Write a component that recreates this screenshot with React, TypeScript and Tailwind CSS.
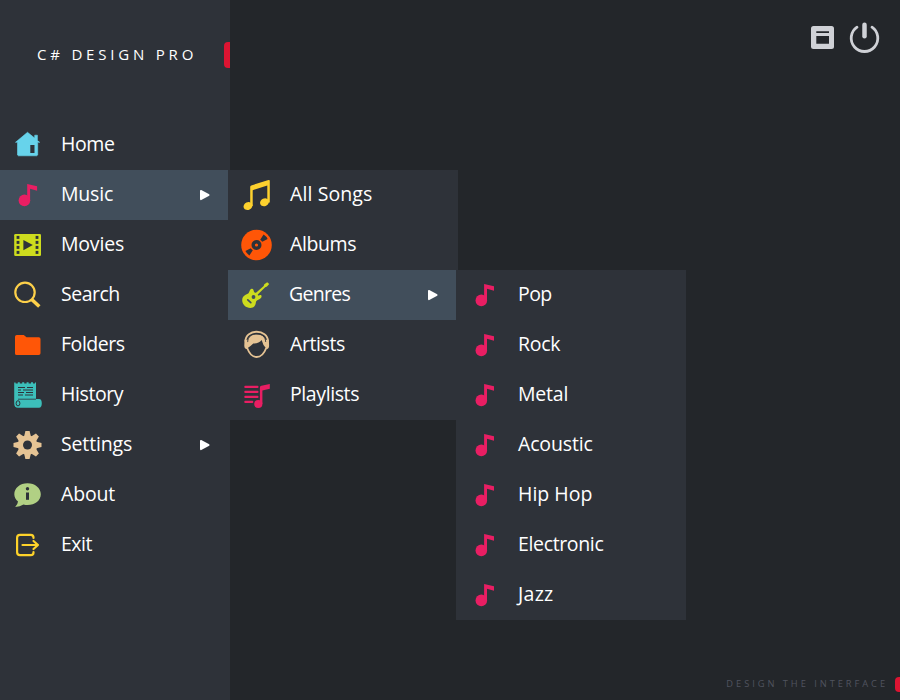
import React from "react";

type IconProps = { children: React.ReactNode };
const Icon = ({ children }: IconProps) => (
  <svg viewBox="0 0 60 50" className="h-[50px] w-[60px] shrink-0">{children}</svg>
);

const BG = "#2e3239";

const NoteShape = () => (
  <g fill="#e91e63">
    <circle cx="24.4" cy="30.4" r="5.8" />
    <path d="M27.2 30V14l9.9 2.2v4.6l-7-2V31z" />
  </g>
);
const Note = () => (
  <Icon><NoteShape /></Icon>
);
const GenreNote = () => (
  <Icon><g transform="translate(.9 0)"><NoteShape /></g></Icon>
);
const Home = () => (
  <Icon>
    <path fill="#67d3eb" stroke="#67d3eb" strokeWidth=".6" strokeLinejoin="round" d="M15.500 22.3 27.500 12.300l7.200 5.800V15.200h2.700v5.400l2.300 1.700h-2V35l-1 .8H18.400L17.500 35V22.300z" />
    <path fill={BG} d="M30.300 25h4.200v8h-4.200z" />
  </Icon>
);
const Movie = () => (
  <Icon>
    <rect x="14.200" y="14" width="26.800" height="22" rx="1.300" fill="#cddc1e" />
    <g fill={BG}>
      {[15.9, 20.9, 25.9, 30.9].map((y) => (
        <React.Fragment key={y}>
          <rect x="16.600" y={y} width="2.800" height="3" />
          <rect x="35.600" y={y} width="2.800" height="3" />
        </React.Fragment>
      ))}
      <path d="M23.400 20 32.800 25l-9.400 5.200z" />
    </g>
  </Icon>
);
const Search = () => (
  <Icon>
    <circle cx="25" cy="22.300" r="9.700" fill="none" stroke="#fdd04a" strokeWidth="2.200" />
    <path d="M31.500 29.200 39.300 36.600" stroke="#fdd04a" strokeWidth="3.500" />
  </Icon>
);
const Folder = () => (
  <Icon>
    <path fill="#ff5607" d="M15 33.500V16.800q0-1.800 1.800-1.800h7l2.700 2.200h12.200q1.800 0 1.800 1.800v14.300q0 1.700-1.800 1.700h-22Q15 35 15 33.500z" />
  </Icon>
);
const History = () => (
  <Icon>
    <path fill="#3cbfba" d="M14.200 12.500h1.400v1h2.200v-1.300h2v1.300h2.400v-1.300h2v1.300h2.400v-1.300h2v1.300h2.400v-1.300h2v1.300h2v-1h1V29H39q2.800 0 2.800 4.300T39 37.800H18q-3.800 0-3.800-4.500z" />
    <g stroke={BG} fill="none" strokeWidth="1">
      <path d="M18 17.500h7M27 17.500h6M18 20h3M23 20h10M18 22.500h6M26 22.500h7M18 25h5M25 25h8" />
      <path d="M18 29.200h18" strokeWidth=".8" />
      <ellipse cx="18" cy="33.300" rx="1.900" ry="2.600" />
    </g>
  </Icon>
);
const Gear = () => (
  <Icon>
    <g fill="#e5c394">
      {[0, 45, 90, 135].map((a) => (
        <path key={a} transform={`rotate(${a} 27.5 25)`} d="M25.400 11h4.200l1.200 5v18l-1.200 5h-4.200l-1.200-5V16z" />
      ))}
      <circle cx="27.500" cy="25" r="9.800" />
    </g>
    <circle cx="27.500" cy="25" r="4.500" fill={BG} />
  </Icon>
);
const About = () => (
  <Icon>
    <path fill="#b1d084" d="M18 31.500C15.700 29.500 14.300 27 14.300 24.200 14.300 18 20 13.200 27.500 13.200S40.800 18 40.800 24.200 35 35 27.500 35q-2 0-4-.5-3.500 2.300-8.300 2.400 2.500-2.200 2.800-5.400z" />
    <g fill={BG}>
      <circle cx="27.500" cy="18.800" r="1.700" />
      <path d="M26 22.500h3v7.300h-3z" />
    </g>
  </Icon>
);
const Exit = () => (
  <Icon>
    <path
      fill="none"
      stroke="#fdd22a"
      strokeWidth="2.200"
      strokeLinecap="round"
      strokeLinejoin="round"
      d="M33.500 18v-.5q0-2.700-2.700-2.700H20q-2.900 0-2.900 2.900v14.600q0 2.900 2.900 2.900h10.800q2.700 0 2.700-2.700V32M22.500 25h15.500M33.500 21 38 25l-4.500 4"
    />
  </Icon>
);
const Songs = () => (
  <Icon>
    <g fill="#fdd12e">
      <ellipse cx="20" cy="36" rx="4.600" ry="3.800" transform="rotate(-25 20 36)" />
      <ellipse cx="36.500" cy="32.200" rx="4.600" ry="3.800" transform="rotate(-25 36.500 32.200)" />
      <path d="M22.200 36V17q0-1.200 1.100-1.600L40.500 10.100q1.300-.4 1.300.8V32.500h-2.500V15.400L24.700 20.200V36z" />
    </g>
  </Icon>
);
const Disc = () => (
  <Icon>
    <circle cx="28.500" cy="25" r="15.300" fill="#ff5607" />
    <circle cx="28.500" cy="25" r="3.300" fill="none" stroke={BG} strokeWidth="3.400" />
    <path fill={BG} d="M32.200 19.800 35.600 14.600Q38.500 16.500 39.600 18.900L34.300 21.800Q33.500 20.600 32.200 19.800zM24.800 30.200 21.400 35.400Q18.500 33.500 17.400 31.100L22.700 28.200Q23.500 29.400 24.800 30.200z" />
  </Icon>
);
const Guitar = () => (
  <Icon>
    <path
      fill="#cddc1e"
      d="M23.500 18.800C21.500 19.500 21.700 22 20.500 23.300 18.500 24.900 14.200 25.300 14.200 30.200 14.200 34.500 18 37.900 22.300 37.900 26.300 37.900 27.600 35 27.900 32.200 28.500 29.500 33.300 30 33.600 26.300 33.600 25 32.300 24.700 31.500 25.300 30.500 26 29.300 25.300 30 24.300L37.200 17.200 39 16.600 41.200 14 39.200 12.200 36.300 14.300 35.700 16 28.300 22.500C27.200 23 26.400 22.600 26 21.700 25.600 20.200 25.300 18.300 23.500 18.800z"
    />
    <circle cx="25.500" cy="27" r="1.900" fill="#414e5b" />
    <path d="m19.800 29.900 3 2.800" stroke="#414e5b" strokeWidth="1.700" strokeLinecap="round" />
  </Icon>
);
const Artist = () => (
  <Icon>
    <g fill="none" stroke="#e5c394">
      <path strokeWidth="1.800" d="M17.300 21.500C17.600 8.500 39.800 8.500 40.100 21.500" />
      <path strokeWidth="1.800" d="M19.200 28C21 33 24.500 37 28.600 37S36.400 33 38.200 28" />
    </g>
    <path fill="#e5c394" d="M16.700 19.800h2.800v9.400q-3.200-.2-3.200-3.500 0-3.700.4-5.900zM40.700 19.800h-2.800v9.400q3.200-.2 3.200-3.500 0-3.700-.4-5.900z" />
    <path fill="#e5c394" d="M19 28.500C18.500 19 20.500 14.600 28.600 14.600S38.700 19 38.200 28.500Q34.800 25 33.600 20 31 23.300 25.300 23.600 22.700 26.300 19 28.500z" />
    <path fill="none" stroke={BG} strokeWidth=".8" d="M19.700 22C20 11 37.400 11 37.700 22" />
  </Icon>
);
const Playlist = () => (
  <Icon>
    <path d="M17.300 16.900h12.200M17.300 21.900h12.200M17.300 26.900h12.200M17.300 31.900h7" stroke="#e91e63" strokeWidth="2.100" strokeLinecap="round" />
    <ellipse cx="30.300" cy="34" rx="4.100" ry="4" fill="#e91e63" />
    <path fill="#e91e63" d="M31.900 34V17.500q0-1.500 1.500-1.800l8.400-1.700v4.700l-7.400 1.700V34z" />
  </Icon>
);

type Item = { label: string; icon: () => React.JSX.Element; active?: boolean; arrow?: boolean; track: string };

const mainItems: Item[] = [
  { label: "Home", icon: Home, track: "tracking-[-0.4px]" },
  { label: "Music", icon: Note, active: true, arrow: true, track: "tracking-[-0.2px]" },
  { label: "Movies", icon: Movie, track: "tracking-[-0.2px]" },
  { label: "Search", icon: Search, track: "tracking-[-0.5px]" },
  { label: "Folders", icon: Folder, track: "tracking-[-0.45px]" },
  { label: "History", icon: History, track: "tracking-[-0.4px]" },
  { label: "Settings", icon: Gear, arrow: true, track: "tracking-[-0.15px]" },
  { label: "About", icon: About, track: "tracking-[-0.15px]" },
  { label: "Exit", icon: Exit, track: "tracking-[-0.5px]" },
];
const musicItems: Item[] = [
  { label: "All Songs", icon: Songs, track: "tracking-[0.1px]" },
  { label: "Albums", icon: Disc, track: "tracking-[-0.4px]" },
  { label: "Genres", icon: Guitar, active: true, arrow: true, track: "-ml-px tracking-[-0.7px]" },
  { label: "Artists", icon: Artist, track: "tracking-[-0.4px]" },
  { label: "Playlists", icon: Playlist, track: "tracking-[-0.4px]" },
];
const genreItems: Item[] = [
  { label: "Pop", icon: GenreNote, track: "tracking-[-0.6px]" },
  { label: "Rock", icon: GenreNote, track: "tracking-[-0.3px]" },
  { label: "Metal", icon: GenreNote, track: "tracking-[-0.2px]" },
  { label: "Acoustic", icon: GenreNote, track: "tracking-[-0.15px]" },
  { label: "Hip Hop", icon: GenreNote, track: "" },
  { label: "Electronic", icon: GenreNote, track: "tracking-[-0.35px]" },
  { label: "Jazz", icon: GenreNote, track: "tracking-[0.3px]" },
];

const Row = ({ item, pad = "pl-px" }: { item: Item; pad?: string }) => (
  <li className={"flex h-[50px] w-[228px] items-center " + (item.active ? "bg-[#414e5b]" : "")}>
    <item.icon />
    <span className={"flex-1 whitespace-nowrap pb-0.5 text-[19.5px] leading-[26px] text-white " + pad + " " + item.track}>
      {item.label}
    </span>
    {item.arrow && (
      <svg viewBox="0 0 10 12" className="mr-[18px] h-3 w-2.5">
        <path d="M0 2Q0 .5 1.300 1L9.200 5.300Q10 6 9.200 6.700L1.300 11Q0 11.500 0 10z" fill="#fff" />
      </svg>
    )}
  </li>
);

export default function App() {
  return (
    <main className="relative flex h-[700px] w-[900px] overflow-hidden bg-[#23262a] font-['Open_Sans','Noto_Sans',sans-serif]">
      <aside className="h-full w-[230px] bg-[#2e3239]">
        <header className="flex h-[120px] items-start justify-between pl-[37px] pt-[42px]">
          <h1 className="text-[15px] leading-6 tracking-[3.8px] whitespace-nowrap text-white">C# DESIGN PRO</h1>
          <span className="h-[26px] w-1.5 rounded-l bg-[#dc1432]" />
        </header>
        <ul>{mainItems.map((i) => <Row key={i.label} item={i} />)}</ul>
      </aside>
      <section className="flex flex-1 flex-col items-end justify-between">
        <div className="flex pt-[22px] pr-[19px]">
          <svg viewBox="810 22 71 32" className="h-8 w-[71px]">
            <rect x="811" y="26" width="23" height="23" rx="2.500" fill="#cfd1d6" />
            <path d="M816.300 31.200h12.700v1.800h-12.700zM816.300 36h12.700v7.700h-12.700z" fill="#23262a" />
            <path d="M857 27.200A13.300 13.300 0 1 0 872 27.200" fill="none" stroke="#cfd1d6" strokeWidth="2.800" strokeLinecap="round" />
            <path d="M864.500 24.700v11.500" stroke="#cfd1d6" strokeWidth="4.500" strokeLinecap="round" />
          </svg>
        </div>
        <footer className="flex h-[23px] items-start">
          <span className="text-[9.300px] leading-[14px] tracking-[2.950px] whitespace-nowrap text-[#50535f]">DESIGN THE INTERFACE</span>
          <span className="ml-[7px] h-[15px] w-[5px] rounded-l bg-[#dc1432]" />
        </footer>
      </section>
      <ul className="absolute top-[170px] left-[228px] w-[230px] bg-[#2e3239]">
        {musicItems.map((i) => <Row key={i.label} item={i} pad="pl-0.5" />)}
      </ul>
      <ul className="absolute top-[270px] left-[456px] w-[230px] bg-[#2e3239]">
        {genreItems.map((i) => <Row key={i.label} item={i} pad="pl-0.5" />)}
      </ul>
    </main>
  );
}
